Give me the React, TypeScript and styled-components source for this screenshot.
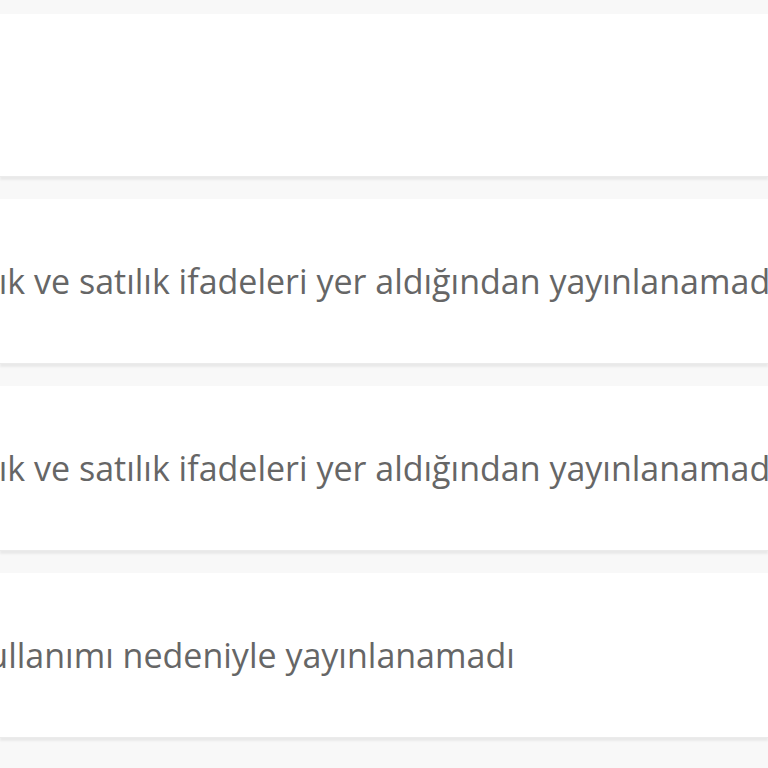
import React from "react";
import styled, { createGlobalStyle } from "styled-components";

const GlobalStyle = createGlobalStyle`
  html, body {
    margin: 0;
    padding: 0;
    background: #f8f8f8;
  }
  body {
    font-family: "Open Sans", "DejaVu Sans", sans-serif;
    overflow: hidden;
  }
`;

const Page = styled.div`
  width: 768px;
  height: 768px;
  overflow: hidden;
  padding-top: 14px;
  display: flex;
  flex-direction: column;
  gap: 22px;
  box-sizing: border-box;
`;

const Card = styled.div<{ $height: number }>`
  height: ${({ $height }) => $height}px;
  flex-shrink: 0;
  background: #ffffff;
  box-shadow: 0 3px 2px rgba(0, 0, 0, 0.06);
  border-bottom: 1px solid #ebebeb;
  display: flex;
  align-items: center;
  overflow: hidden;
`;

const Reason = styled.p<{ $shift: number }>`
  margin: 0 0 0 ${({ $shift }) => $shift}px;
  white-space: nowrap;
  font-size: 34px;
  color: #666666;
`;

const reasons = [
  { text: "", shift: 0, height: 162 },
  { text: "Kiralık ve satılık ifadeleri yer aldığından yayınlanamadı", shift: -72, height: 164 },
  { text: "Kiralık ve satılık ifadeleri yer aldığından yayınlanamadı", shift: -72, height: 164 },
  { text: "Hatalı kelime kullanımı nedeniyle yayınlanamadı", shift: -245, height: 164 },
];

export default function App() {
  return (
    <>
      <GlobalStyle />
      <Page>
        {reasons.map((r, i) => (
          <Card key={i} $height={r.height}>
            {r.text && <Reason $shift={r.shift}>{r.text}</Reason>}
          </Card>
        ))}
      </Page>
    </>
  );
}
